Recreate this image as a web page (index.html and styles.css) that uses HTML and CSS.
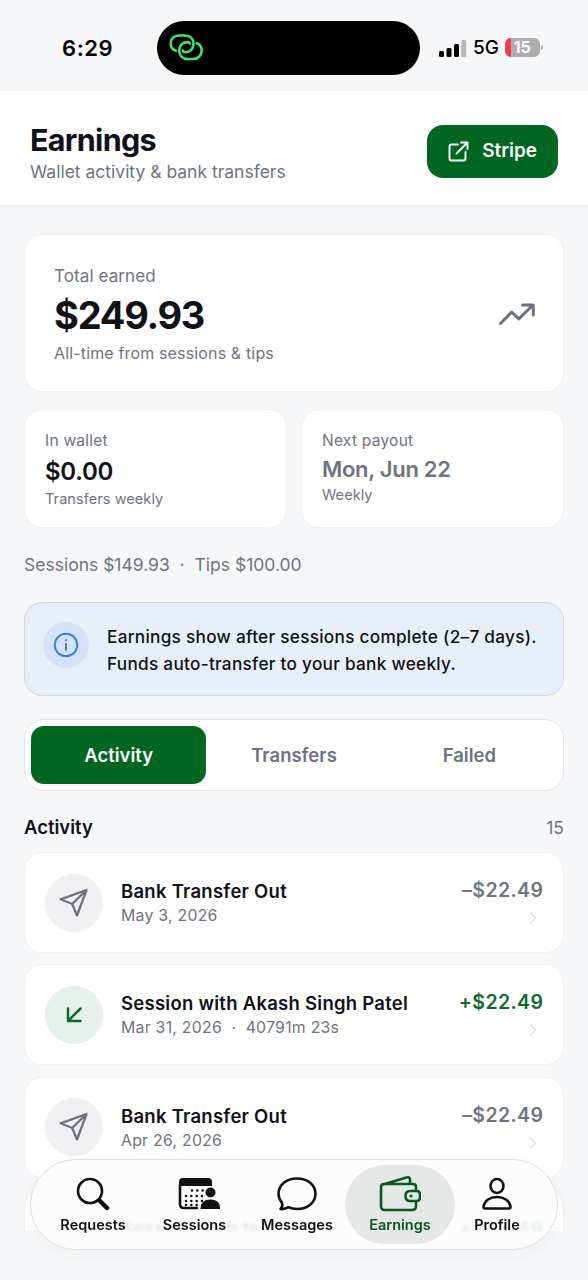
FILE: index.html
```html
<!DOCTYPE html>
<html lang="en">
<head>
<meta charset="utf-8">
<title>Earnings</title>
<link rel="stylesheet" href="styles.css">
</head>
<body>
<svg class="defs" width="0" height="0" aria-hidden="true">
  <symbol id="send" viewBox="0 0 30 30"><path d="M27.500 2 1.600 11.300 13.200 16 18 27.500ZM27.500 2 13.200 16"/></symbol>
  <symbol id="receive" viewBox="0 0 16 16"><path d="M14.500 1.500 2 14M2 1.500V14H14.500"/></symbol>
  <symbol id="chevron" viewBox="0 0 8 12"><path d="M1.500 1 6.500 6 1.500 11"/></symbol>
</svg>
<div class="screen">
  <div class="status">
    <span class="clock">6:29</span>
    <div class="island">
      <svg width="34" height="28" viewBox="0 0 34 28"><path d="M6.800 17.800C3.400 16.500 1.700 13.800 1.700 10.800 1.700 5.800 5 2.500 9.800 2.500H15.500C21 2.500 24.500 5.800 24.500 10.600 24.500 16 21 19.300 16.500 19.300 14.500 19.300 14 18.600 13.800 17.600"/><path d="M27.700 10.200C31 11.500 32.700 14.200 32.700 17.200 32.700 22.300 29.300 26 24.300 26H18.900C13.300 26 10.200 22.400 10.200 17.800 10.200 12.400 13.800 9.100 18 9.100 20 9.100 20.600 9.600 20.800 10.600"/></svg>
    </div>
    <div class="signal">
      <svg width="28" height="18" viewBox="0 0 28 18"><rect x="0" y="12" width="5" height="6" rx="1.500"/><rect x="7.500" y="9" width="5" height="9" rx="1.500"/><rect x="15" y="5" width="5" height="13" rx="1.500"/><rect class="off" x="22.300" y="1" width="5" height="17" rx="1.500"/></svg>
      <span class="network">5G</span>
      <span class="battery">15</span><i class="cap"></i>
    </div>
  </div>
  <header class="header">
    <div class="heading">
      <h1>Earnings</h1>
      <p>Wallet activity &amp; bank transfers</p>
    </div>
    <button class="stripe">
      <svg width="21" height="21" viewBox="0 0 21 21"><path d="M10 3.500H3.500Q1.500 3.500 1.500 5.500V17.500Q1.500 19.500 3.500 19.500H15.500Q17.500 19.500 17.500 17.500V11M13 1.500H19.500V8M19.500 1.500 8.500 12.500"/></svg>
      <span>Stripe</span>
    </button>
  </header>
  <main class="content">
    <section class="card total">
      <div>
        <div class="total-label">Total earned</div>
        <div class="total-value">$249.93</div>
        <div class="total-note">All-time from sessions &amp; tips</div>
      </div>
      <svg width="36" height="22" viewBox="0 0 36 22"><path d="M1.500 20.500 12.700 9 19.800 15.800 34 2M23.500 2H34.300V12"/></svg>
    </section>
    <div class="pair">
      <section class="card mini">
        <div class="mini-label">In wallet</div>
        <div class="mini-value wallet">$0.00</div>
        <div class="mini-note">Transfers weekly</div>
      </section>
      <section class="card mini">
        <div class="mini-label">Next payout</div>
        <div class="mini-value payout">Mon, Jun 22</div>
        <div class="mini-note">Weekly</div>
      </section>
    </div>
    <div class="breakdown">Sessions $149.93 &nbsp;·&nbsp; Tips $100.00</div>
    <section class="info">
      <span class="info-icon"><svg width="26" height="26" viewBox="0 0 26 26"><circle cx="13" cy="13" r="11.200"/><path d="M13 12V18"/><path d="M13 8V8.600"/></svg></span>
      <p>Earnings show after sessions complete (2–7 days).<br>Funds auto-transfer to your bank weekly.</p>
    </section>
    <div class="tabs">
      <span class="tab active">Activity</span>
      <span class="tab">Transfers</span>
      <span class="tab">Failed</span>
    </div>
    <div class="list-head"><h2>Activity</h2><span>15</span></div>
    <div class="list">
      <article class="card row">
        <span class="avatar"><svg class="send"><use href="#send"/></svg></span>
        <div class="row-text"><h3>Bank Transfer Out</h3><p>May 3, 2026</p></div>
        <div class="row-end"><b>–$22.49</b><svg class="chev"><use href="#chevron"/></svg></div>
      </article>
      <article class="card row">
        <span class="avatar in"><svg class="receive"><use href="#receive"/></svg></span>
        <div class="row-text"><h3>Session with Akash Singh Patel</h3><p>Mar 31, 2026 &nbsp;·&nbsp; 40791m 23s</p></div>
        <div class="row-end in"><b>+$22.49</b><svg class="chev"><use href="#chevron"/></svg></div>
      </article>
      <article class="card row">
        <span class="avatar"><svg class="send"><use href="#send"/></svg></span>
        <div class="row-text"><h3>Bank Transfer Out</h3><p>Apr 26, 2026</p></div>
        <div class="row-end"><b>–$22.49</b><svg class="chev"><use href="#chevron"/></svg></div>
      </article>
      <article class="card row last">
        <div class="row-text"><h3>Session with test</h3></div>
        <div class="row-end in"><b>+$22.49</b></div>
      </article>
    </div>
  </main>
  <nav class="nav">
    <a class="item requests"><svg width="34" height="34" viewBox="0 0 34 34"><circle cx="14" cy="14" r="12"/><path class="handle" d="M23.500 23.500 31 31"/></svg><span>Requests</span></a>
    <a class="item sessions"><svg width="42" height="34" viewBox="0 0 42 34"><path class="solid" d="M1 10V5Q1 1 5 1H30Q34 1 34 5V9H1Z"/><path d="M2 8V27Q2 31 6 31H19"/><path class="dots" d="M14 13.500H26M8 19H26M8 24H24M8 28H20"/><circle class="solid" cx="32.500" cy="15.500" r="5"/><path class="solid" d="M22.500 32Q22.500 22.500 32.500 22.500T42 32Z"/></svg><span>Sessions</span></a>
    <a class="item messages"><svg width="40" height="34" viewBox="0 0 40 34"><path d="M3.500 32C5.200 30.400 5.700 28.300 5 25.800 2.700 23 1.500 20 1.500 16.800 1.500 8 9.500 1.500 20 1.500S38.500 8 38.500 16.800 30.500 32 20 32C17 32 14 31.400 11.500 30.200 9 31.700 6 32.300 3.500 32Z"/></svg><span>Messages</span></a>
    <a class="item earnings"><svg width="42" height="36" viewBox="0 0 42 36"><path d="M37 15V11Q37 8 34 8H5Q2 8 2 11V30Q2 34 6 34H33Q37 34 37 30V25M4 8.500 27.500 1.500Q31 .500 31 4V8M35.500 15H31Q26.500 15 26.500 20T31 25H37.500Q41 25 41 21.500V18.500Q41 15 37.500 15Z"/><circle class="clasp" cx="32" cy="20" r="1.600"/></svg><span>Earnings</span></a>
    <a class="item profile"><svg width="30" height="34" viewBox="0 0 30 34"><ellipse cx="15" cy="9" rx="6.500" ry="7"/><path d="M3 31.500Q1.500 31.500 1.500 29.500C2.500 23.500 8 20 15 20S27.500 23.500 28.500 29.500Q28.500 31.500 27 31.500Z"/></svg><span>Profile</span></a>
  </nav>
</div>
</body>
</html>
```
FILE: styles.css
```css
* { box-sizing: border-box; }
body { margin: 0; font-family: Inter, "Liberation Sans", sans-serif; color: #101217; }
h1, h2, h3, p { margin: 0; }
svg { display: block; flex: none; fill: none; stroke: currentColor; stroke-linecap: round; stroke-linejoin: round; }
.defs { position: absolute; }
.screen { position: relative; width: 588px; height: 1280px; overflow: hidden; background: #f6f7f9; }

.status { display: flex; align-items: center; height: 91px; padding: 4px 44px 0 62px; color: #000; }
.clock { width: 95px; font-size: 22px; font-weight: 600; line-height: 28px; letter-spacing: .6px; }
.island { display: flex; align-items: center; width: 263px; height: 54px; padding: 0 0 2px 12px; border-radius: 27px; background: #000; color: #41e565; }
.island svg { stroke-width: 2.6; }
.signal { display: flex; align-items: center; margin-left: 19px; }
.signal svg { fill: #000; stroke: none; }
.signal .off { fill: #b7b8ba; }
.network { margin-left: 6px; font-size: 19px; font-weight: 500; letter-spacing: -.1px; line-height: 24px; }
.battery { width: 35px; height: 19px; margin-left: 6px; border-radius: 6px; background: linear-gradient(90deg, #ef3f4b 6px, #adadaf 6px); color: #fff; font-size: 16px; font-weight: 700; line-height: 19px; text-align: center; }
.cap { width: 2px; height: 5px; margin-left: 1px; border-radius: 0 2px 2px 0; background: #b3b4b6; }

.header { display: flex; align-items: center; justify-content: space-between; height: 115px; padding: 6px 30px 0; border-bottom: 1px solid #eeeff1; background: #fff; }
.heading { padding-top: 4px; }
.header h1 { font-size: 30.500px; font-weight: 700; line-height: 36px; letter-spacing: -.7px; }
.header p { margin-top: 2px; font-size: 17.500px; line-height: 24px; color: #6d7480; }
.stripe { display: flex; align-items: center; gap: 13px; height: 53px; padding: 0 21px; border: 0; border-radius: 16px; background: #006622; color: #fff; font: 600 19px/24px Inter, sans-serif; }
.stripe svg { stroke-width: 1.9; }

.content { display: flex; flex-direction: column; height: 1025px; padding: 28px 24px 0; overflow: hidden; }
.card { border: 1px solid #eff0f2; border-radius: 18px; background: #fff; }
.total { display: flex; flex: none; align-items: center; justify-content: space-between; height: 158px; padding: 1px 28px 0 29px; color: #6d7480; }
.total > svg { stroke-width: 3; }
.total-label { font-size: 17px; line-height: 24px; letter-spacing: .1px; }
.total-value { color: #101217; font-size: 38px; font-weight: 700; line-height: 54px; letter-spacing: -1.250px; }
.total-note { font-size: 16px; line-height: 22px; letter-spacing: .15px; }

.pair { display: grid; flex: none; grid-template-columns: 1fr 1fr; gap: 14px; margin-top: 17px; }
.mini { height: 119px; padding: 20px 20px 0; color: #6d7480; }
.mini-label { font-size: 15.500px; line-height: 22px; letter-spacing: .25px; }
.mini-value { font-weight: 600; }
.wallet { color: #101217; font-size: 24px; line-height: 39px; letter-spacing: -.25px; }
.payout { font-size: 22px; line-height: 35px; letter-spacing: -.3px; }
.mini-note { font-size: 14.500px; line-height: 15px; letter-spacing: .07px; }
.breakdown { flex: none; margin-top: 24px; color: #6d7480; font-size: 17.500px; line-height: 26px; }

.info { display: flex; flex: none; align-items: center; gap: 18px; height: 94px; margin-top: 24px; padding: 0 18px; border: 1.500px solid #c6d8f2; border-radius: 18px; background: #e8eef8; }
.info-icon { display: grid; flex: none; place-items: center; width: 46px; height: 46px; margin-top: -9px; border-radius: 50%; background: #d4e2f8; color: #3f7edb; }
.info-icon svg { stroke-width: 2; }
.info p { padding-top: 2px; font-size: 17.200px; font-weight: 500; line-height: 27.500px; letter-spacing: .28px; white-space: nowrap; }

.tabs { display: grid; flex: none; grid-template-columns: repeat(3, 1fr); height: 72px; margin-top: 23px; padding: 6px; border: 1px solid #e4e5e9; border-radius: 19px; background: #fff; }
.tab { display: grid; place-items: center; border-radius: 13px; color: #6d7480; font-size: 18.500px; font-weight: 600; }
.tab.active { background: #006622; color: #fff; }
.list-head { display: flex; flex: none; align-items: center; justify-content: space-between; height: 26px; margin: 23px 0 12px; }
.list-head h2 { font-size: 18.500px; font-weight: 600; }
.list-head span { color: #6d7480; font-size: 17.500px; }

.list { display: flex; flex: none; flex-direction: column; gap: 11.300px; }
.row { display: flex; align-items: center; height: 101px; padding: 0 20px; }
.avatar { display: grid; flex: none; place-items: center; width: 58px; height: 58px; border-radius: 50%; background: #f0f0f3; color: #6d7480; }
.avatar.in { background: #e7f0ea; color: #0a6b2b; }
.send { width: 30px; height: 30px; stroke-width: 2.300; }
.receive { width: 16px; height: 16px; stroke-width: 2.500; }
.row-text { flex: 1; margin-left: 18px; white-space: nowrap; }
.row-text h3 { font-size: 18.500px; font-weight: 600; line-height: 26px; letter-spacing: .26px; }
.row-text p { color: #6d7480; font-size: 15.800px; line-height: 23px; letter-spacing: .27px; }
.row-end { display: flex; flex-direction: column; align-items: flex-end; padding-bottom: 5px; color: #6d7480; }
.row-end b { margin-right: -.4px; font-size: 19.500px; font-weight: 600; line-height: 28px; letter-spacing: .4px; }
.row-end.in { color: #0a6b2b; }
.chev { width: 8px; height: 12px; margin: 8px 6px 0 0; color: #e0e1e3; stroke-width: 1.500; }
.last { align-items: flex-start; padding-top: 25px; }
.last .row-text { margin-left: 76px; }

.nav { position: absolute; left: 30px; top: 1159px; display: flex; width: 528px; height: 91px; border: 1px solid #dcddde; border-radius: 46px; background: rgba(252, 252, 252, .91); box-shadow: 0 4px 16px rgba(30, 40, 60, .04); backdrop-filter: blur(1.500px); }
.item { display: flex; flex-direction: column; align-items: center; justify-content: flex-end; height: 79px; margin-top: 5px; padding-bottom: 9px; font-size: 14.500px; font-weight: 600; line-height: 20px; color: #111; }
.item svg { margin-bottom: 4px; stroke-width: 2.600; }
.requests { width: 124px; }
.sessions { width: 79px; }
.sessions svg { margin-left: 9px; }
.messages { width: 111px; padding-left: 15px; }
.earnings { width: 110px; border-radius: 40px; background: #e5e6e6; color: #07591f; }
.earnings svg { margin-bottom: 3px; }
.profile { width: 84px; }
.handle { stroke-width: 4.500; }
.solid { fill: currentColor; stroke: none; }
.dots { stroke-width: 2.600; stroke-dasharray: 0 5.330; }
.clasp { fill: currentColor; stroke: none; }
```
